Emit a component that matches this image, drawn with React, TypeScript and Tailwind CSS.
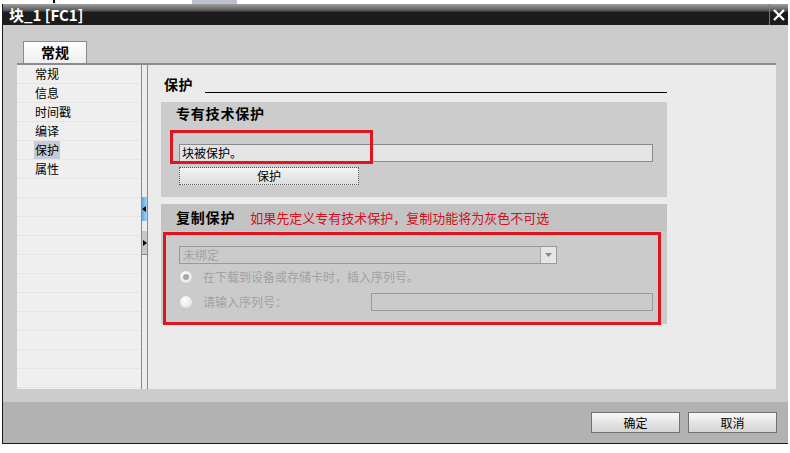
import React from "react";

const font = { fontFamily: '"Noto Sans CJK SC", "Liberation Sans", sans-serif' };

const navItems = ["常规", "信息", "时间戳", "编译", "保护", "属性"];

function Radio({ checked }: { checked?: boolean }) {
  return (
    <span className="flex h-[14px] w-[14px] items-center justify-center rounded-full border border-[#c8c8c8] bg-[radial-gradient(circle_at_40%_35%,#ffffff,#dcdcdc)]">
      {checked && <span className="h-[6px] w-[6px] rounded-full bg-[#a8a8a8]" />}
    </span>
  );
}

function FooterButton({ label }: { label: string }) {
  return (
    <button className="flex h-[21px] w-[89px] items-center justify-center border border-[#707070] bg-[linear-gradient(#fafafa,#e4e4e4_50%,#d4d4d4)] text-[12px] text-black">
      {label}
    </button>
  );
}

export default function App() {
  return (
    <div className="relative flex h-[453px] w-[790px] flex-col overflow-hidden bg-white" style={font}>
      {/* top strip from the window behind */}
      <div className="flex h-[4px] items-start">
        <div className="ml-[53px] h-[3px] w-[2px] bg-black" />
        <div className="ml-[137px] h-[4px] w-[45px] bg-[#bcbfcc]" />
      </div>

      <div className="ml-[2px] flex h-[440px] w-[786px] flex-col border-b border-l border-[#1a1a1a]">
        {/* title bar */}
        <div className="flex h-[21px] items-stretch bg-[linear-gradient(#a0a0a0,#5a5a5a_30%,#1c1c1c_40%,#1c1c1c)]">
          <div className="flex flex-1 items-center pl-[6px] text-[15px] font-bold leading-none text-white">块_1 [FC1]</div>
          <div className="flex w-[19px] items-center justify-center border-l border-[#777]">
            <svg width="14" height="14" viewBox="0 0 14 14">
              <path d="M2 2 L12 12 M12 2 L2 12" stroke="white" strokeWidth="2.4" />
            </svg>
          </div>
        </div>

        {/* body */}
        <div className="flex flex-1 flex-col bg-[#cccccc]">
          <div className="flex pl-[20px] pt-[16px]">
            <div className="flex h-[22px] w-[64px] items-center justify-center border border-b-0 border-[#8a8a8a] bg-[linear-gradient(#ffffff,#eeeeee)] text-[14px] font-bold">
              常规
            </div>
          </div>

          <div className="ml-[14px] flex h-[326px] w-[759px] flex-col border-t-2 border-[#8c8c8c]">
            <div className="flex flex-1">
              {/* nav */}
              <div className="flex w-[124px] flex-col bg-[#efefef]">
                {Array.from({ length: 17 }).map((_, i) => (
                  <div key={i} className="flex h-[19px] items-center border-b border-[#e5e5e5] pl-[17px] text-[12px] text-black">
                    {navItems[i] && (
                      <span className={navItems[i] === "保护" ? "bg-[#c5ccd8] px-[1px]" : "px-[1px]"}>{navItems[i]}</span>
                    )}
                  </div>
                ))}
              </div>

              {/* splitter */}
              <div className="flex w-[7px] flex-col border-l border-r border-[#8a8a8a] bg-[#ececec] pt-[132px]">
                <div className="flex h-[24px] items-center bg-[linear-gradient(90deg,#5aa8e0,#a8d4f2)]">
                  <svg width="5" height="6" viewBox="0 0 5 6"><path d="M4 0 L0 3 L4 6 Z" fill="#000" /></svg>
                </div>
                <div className="mt-[10px] flex h-[24px] items-center border-b border-[#888] bg-[#c8c8c8]">
                  <svg width="5" height="6" viewBox="0 0 5 6"><path d="M1 0 L5 3 L1 6 Z" fill="#000" /></svg>
                </div>
              </div>

              {/* content */}
              <div className="relative flex flex-1 flex-col bg-[#ebebeb] pl-[13px] pt-[11px]">
                <div className="flex h-[18px] w-[506px] items-end">
                  <span className="mb-[3px] pl-[3px] text-[14px] font-bold leading-none tracking-[0.5px]">保护</span>
                  <div className="mb-[1px] ml-[12px] h-[1px] flex-1 bg-black" />
                </div>

                {/* section 1 */}
                <div className="mt-[8px] flex h-[95px] w-[506px] flex-col bg-[#cccccc] pl-[18px]">
                  <div className="-ml-[3px] pt-[2px] text-[14px] font-bold leading-[18px] tracking-[0.8px]">专有技术保护</div>
                  <div className="mt-[22px] flex h-[18px] w-[474px] items-center border border-[#8a8a8a] bg-[#e4e4e4] pl-[2px] text-[12px]">
                    块被保护。
                  </div>
                  <button className="mt-[5px] flex h-[18px] w-[180px] items-center justify-center border border-dotted border-[#555] bg-[linear-gradient(#f4f4f4,#dedede)] text-[12px]">
                    保护
                  </button>
                </div>

                {/* section 2 */}
                <div className="mt-[7px] flex h-[120px] w-[506px] flex-col bg-[#cbcbcb]">
                  <div className="flex h-[27px] items-center bg-[#c3c3c3] pl-[15px]">
                    <span className="text-[14px] font-bold tracking-[0.8px]">复制保护</span>
                    <span className="ml-[15px] text-[13px] text-[#d4101a]">如果先定义专有技术保护，复制功能将为灰色不可选</span>
                  </div>
                  <div className="flex flex-col pl-[18px] pt-[15px] text-[12px] text-[#a2a2a2]">
                    <div className="flex h-[18px] w-[378px] items-stretch border border-[#9a9a9a] bg-[#cbcbcb]">
                      <span className="flex flex-1 items-center pl-[3px]">未绑定</span>
                      <span className="flex w-[16px] items-center justify-center border-l border-[#a8a8a8] bg-[#e6e6e6]">
                        <svg width="7" height="4" viewBox="0 0 7 4"><path d="M0 0 L7 0 L3.5 4 Z" fill="#888" /></svg>
                      </span>
                    </div>
                    <div className="mt-[4px] flex h-[18px] items-center">
                      <Radio checked />
                      <span className="ml-[10px]">在下载到设备或存储卡时，插入序列号。</span>
                    </div>
                    <div className="mt-[7px] flex h-[18px] items-center">
                      <Radio />
                      <span className="ml-[10px] w-[168px]">请输入序列号：</span>
                      <div className="h-[18px] w-[282px] border border-[#9a9a9a] bg-[#cbcbcb]" />
                    </div>
                  </div>
                </div>

                {/* red annotation boxes */}
                <div className="pointer-events-none absolute left-[22px] top-[65px] h-[34px] w-[203px] border-[3px] border-[#e0141c]" />
                <div className="pointer-events-none absolute left-[15px] top-[167px] h-[93px] w-[498px] border-[3px] border-[#e0141c]" />
              </div>
            </div>
          </div>

          {/* footer */}
          <div className="mt-[13px] flex flex-1 items-start justify-end gap-[8px] bg-[#b2b2b2] pr-[11px] pt-[10px]">
            <FooterButton label="确定" />
            <FooterButton label="取消" />
          </div>
        </div>
      </div>
    </div>
  );
}
